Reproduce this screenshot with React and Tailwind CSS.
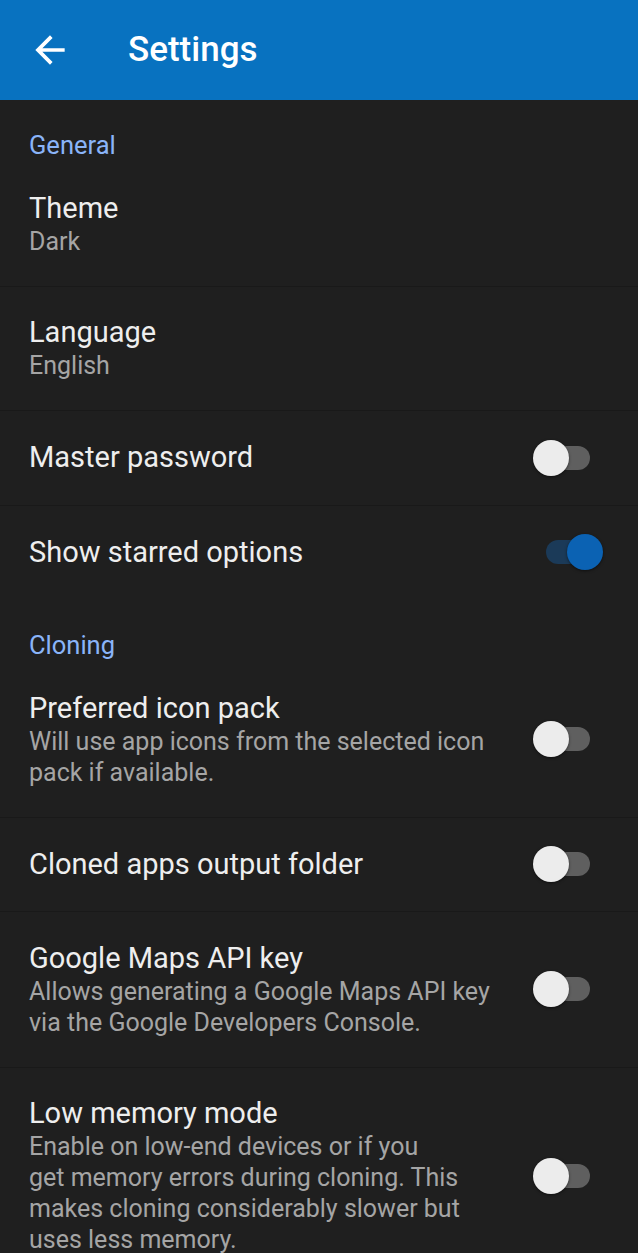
import { useState } from 'react';

function Toggle({ on }) {
  return (
    <div className="relative w-[70px] h-[36px] shrink-0">
      <div
        className={`absolute left-[13px] right-[13px] top-[6px] h-[24px] rounded-full ${
          on ? 'bg-[#1b3a58]' : 'bg-[#5f5f5f]'
        }`}
      />
      <div
        className={`absolute top-0 w-[36px] h-[36px] rounded-full shadow-[0_1px_3px_rgba(0,0,0,0.5)] ${
          on ? 'right-0 bg-[#0b62b3]' : 'left-0 bg-[#ececec]'
        }`}
      />
    </div>
  );
}

function Category({ children, first }) {
  return (
    <div
      className={`pl-[29px] pb-[1px] text-[25.5px] leading-[32px] text-[#8ab4f8] ${
        first ? 'pt-[29px]' : 'pt-[30px]'
      }`}
    >
      {children}
    </div>
  );
}

function Item({ title, desc, toggle, last }) {
  return (
    <div
      className={`flex items-center pl-[29px] pr-[35px] py-[28.75px] ${
        last ? '' : 'border-b border-[#191919]'
      }`}
    >
      <div className="flex-1 min-w-0">
        <div className="text-[29px] leading-[35px] text-[#eeeeee]">{title}</div>
        {desc && <div className="text-[25px] leading-[31px] text-[#a5a5a5]">{desc}</div>}
      </div>
      {toggle !== undefined && <div className="ml-[12px]"><Toggle on={toggle} /></div>}
    </div>
  );
}

export default function App() {
  const [starred] = useState(true);

  return (
    <div className="min-h-screen bg-[#1f1f1f]" style={{ fontFamily: 'Roboto, "Open Sans", sans-serif' }}>
      <div className="h-[100px] bg-[#0872c0] flex items-center">
        <svg className="ml-[28px] w-[44px] h-[44px]" viewBox="0 0 24 24" fill="#ffffff">
          <path d="M20 11H7.83l5.59-5.59L12 4l-8 8 8 8 1.41-1.41L7.83 13H20v-2z" />
        </svg>
        <div className="ml-[56px] text-[35px] font-medium text-white">Settings</div>
      </div>

      <Category first>General</Category>
      <Item title="Theme" desc="Dark" />
      <Item title="Language" desc="English" />
      <Item title="Master password" toggle={false} />
      <Item title="Show starred options" toggle={starred} last />

      <Category>Cloning</Category>
      <Item
        title="Preferred icon pack"
        desc={<>Will use app icons from the selected icon<br />pack if available.</>}
        toggle={false}
      />
      <Item title="Cloned apps output folder" toggle={false} />
      <Item
        title="Google Maps API key"
        desc={<>Allows generating a Google Maps API key<br />via the Google Developers Console.</>}
        toggle={false}
      />
      <Item
        title="Low memory mode"
        desc={
          <>
            Enable on low-end devices or if you<br />
            get memory errors during cloning. This<br />
            makes cloning considerably slower but<br />
            uses less memory.
          </>
        }
        toggle={false}
        last
      />
    </div>
  );
}
